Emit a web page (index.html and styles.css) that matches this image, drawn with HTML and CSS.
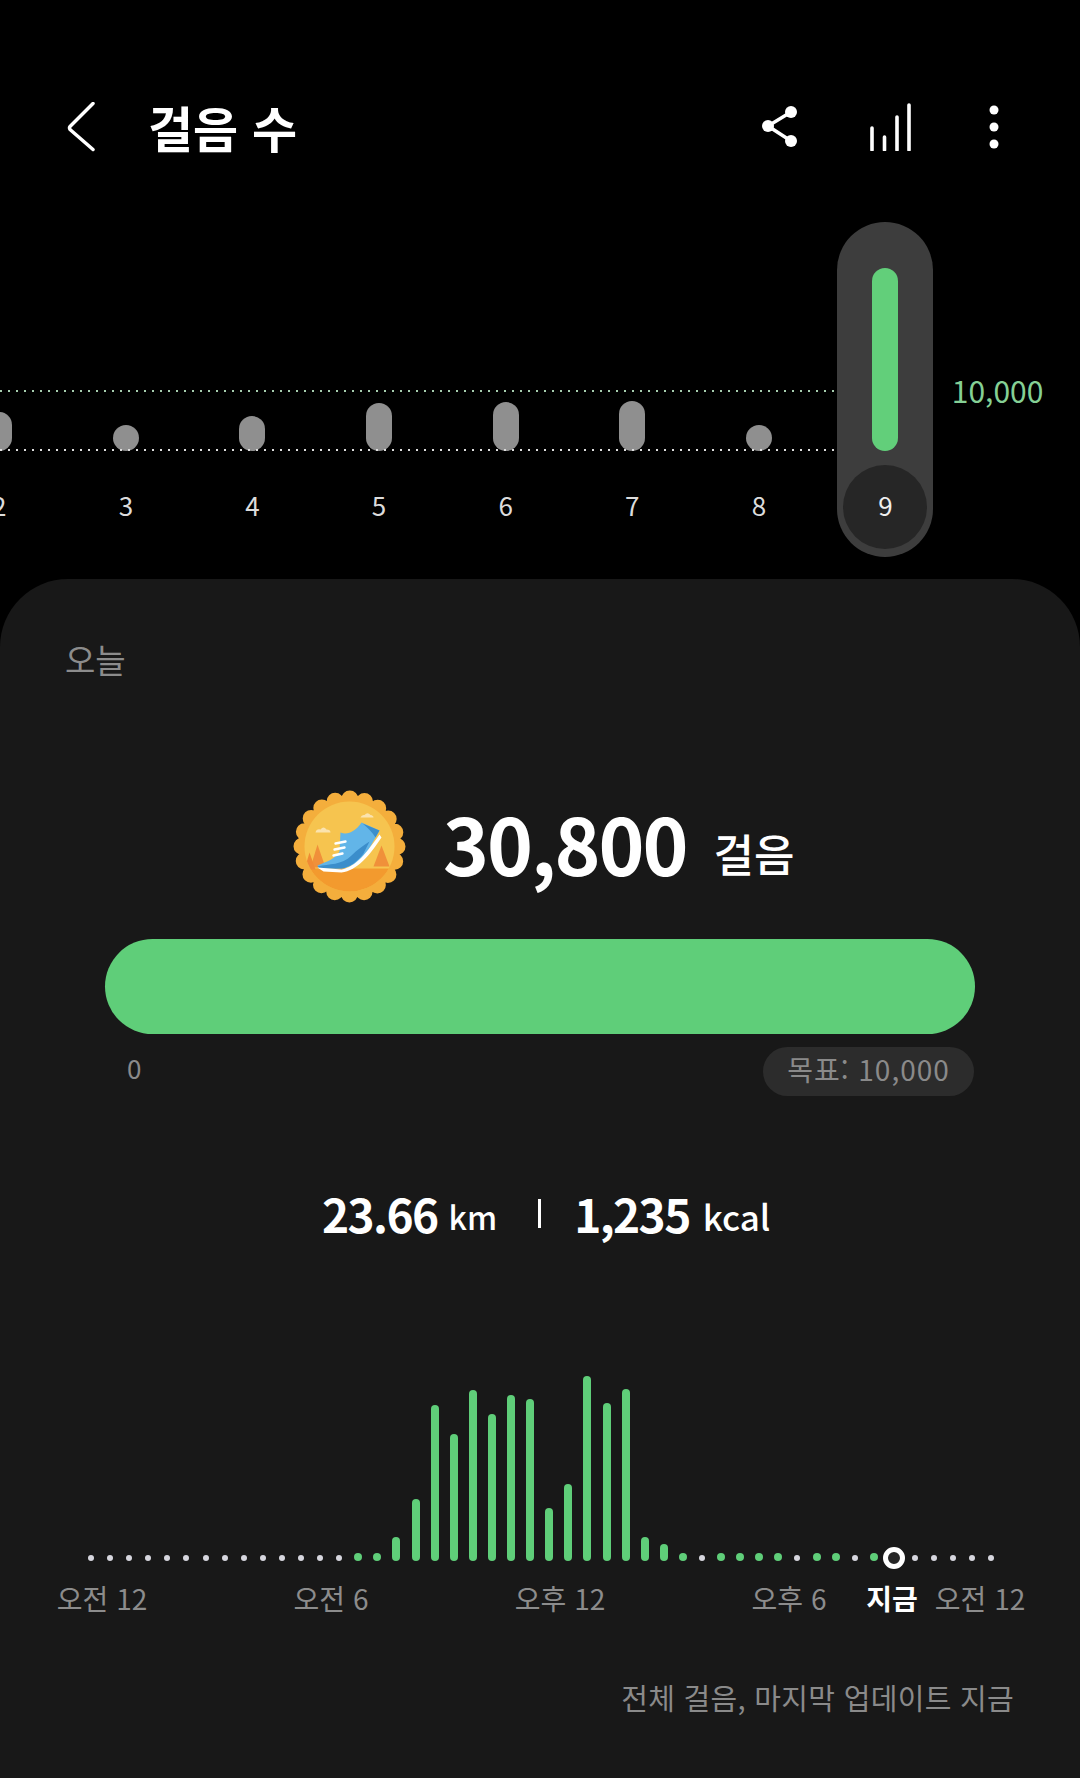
FILE: index.html
```html
<!DOCTYPE html>
<html lang="ko">
<head>
    <meta charset="UTF-8">
    <meta name="viewport" content="width=device-width, initial-scale=1.0">
    <title>걸음 수</title>
    <link rel="stylesheet" href="styles.css">
</head>
<body>
    <!-- Top bar -->
    <header class="top-bar">
        <svg class="icon-back" viewBox="0 0 30 50">
            <path d="M27 2 L4 25 Q3 26 4 28 L27 48" transform="translate(0 -0.5)"/>
        </svg>
        <h1 class="page-title">걸음 수</h1>
        <svg class="icon-share" viewBox="0 0 40 46">
            <path d="M31 8 L8 22 L31 37"/>
            <circle cx="31" cy="8" r="6"/>
            <circle cx="8" cy="22" r="6"/>
            <circle cx="31" cy="37" r="6"/>
        </svg>
        <svg class="icon-bars" viewBox="0 0 44 48">
            <path d="M3 25 V47 M15.5 34 V47 M28 14 V47 M40 2 V47"/>
        </svg>
        <svg class="icon-more" viewBox="0 0 16 46">
            <circle cx="8" cy="6" r="4.5"/>
            <circle cx="8" cy="23" r="4.5"/>
            <circle cx="8" cy="40" r="4.5"/>
        </svg>
    </header>

    <!-- Daily history strip -->
    <section class="history">
        <div class="goal-line"></div>
        <div class="base-line"></div>
        <div class="day">
            <div class="day-bar-area"><div class="day-bar" style="height: 39px"></div></div>
            <div class="day-label">2</div>
        </div>
        <div class="day">
            <div class="day-bar-area"><div class="day-bar" style="height: 26px"></div></div>
            <div class="day-label">3</div>
        </div>
        <div class="day">
            <div class="day-bar-area"><div class="day-bar" style="height: 35px"></div></div>
            <div class="day-label">4</div>
        </div>
        <div class="day">
            <div class="day-bar-area"><div class="day-bar" style="height: 48px"></div></div>
            <div class="day-label">5</div>
        </div>
        <div class="day">
            <div class="day-bar-area"><div class="day-bar" style="height: 49px"></div></div>
            <div class="day-label">6</div>
        </div>
        <div class="day">
            <div class="day-bar-area"><div class="day-bar" style="height: 50px"></div></div>
            <div class="day-label">7</div>
        </div>
        <div class="day">
            <div class="day-bar-area"><div class="day-bar" style="height: 26px"></div></div>
            <div class="day-label">8</div>
        </div>
        <div class="day">
            <div class="day-pill">
                <div class="day-pill-bar"></div>
                <div class="day-pill-label"><span>9</span></div>
            </div>
        </div>
        <div class="goal-label">10,000</div>
    </section>

    <!-- Today card -->
    <main class="card">
        <div class="card-title">오늘</div>

        <div class="hero">
            <svg class="medal" viewBox="13.5 10.5 113 113">
                <defs>
                    <clipPath id="medalDisc"><circle cx="70" cy="67" r="45"/></clipPath>
                </defs>
                <circle cx="70" cy="67" r="49" fill="#f4ae3c"/>
                <circle cx="70" cy="67" r="47.5" fill="none" stroke="#f4ae3c" stroke-width="17" stroke-linecap="round" stroke-dasharray="0 14.92"/>
                <g clip-path="url(#medalDisc)">
                    <rect x="20" y="20" width="100" height="100" fill="#f6c44f"/>
                    <rect x="20" y="89" width="100" height="40" fill="#f39a2e"/>
                    <path d="M31 88 L38 65 L46 88 Z" fill="#f0903a"/>
                    <path d="M25 90 L30 73 L36 90 Z" fill="#f08a35"/>
                    <path d="M94 87 L102 66 L110 87 Z" fill="#f0903a"/>
                </g>
                <path d="M36 53 Q37 49 41 50 Q44 46 47 50 Q51 50 51 53 Z" fill="#fbe3ae"/>
                <path d="M81 38 Q82 35 85 35.5 Q88 32 91 35.5 Q94 36 94 38 Z" fill="#fbe3ae"/>
                <path d="M38 86 C48 82 56 79 60 72 L61 53 C68 56 76 52 82 43 L100 51 L88 72 C80 82 72 88 62 89 L40 89 Z" fill="#62b5e8"/>
                <path d="M38 87 C50 84 62 86 72 76 C78 70 84 66 90 62 L84 74 C78 82 70 88 62 89 L40 89 Z" fill="#3b8ecb"/>
                <path d="M38 88 L62 90 C76 88 88 72 100 55 L102 58 C90 76 78 91 62 93 L44 92 Z" fill="#ffffff"/>
                <path d="M83 44 L100 51 L96 58 C92 52 88 48 83 44 Z" fill="#3b8ecb"/>
                <path d="M56 64 L66 62 M55 70 L65 68 M54 76 L63 74" stroke="#ffffff" stroke-width="2.4" stroke-linecap="round" fill="none"/>
            </svg>
            <span class="hero-count">30,800</span>
            <span class="hero-unit">걸음</span>
        </div>

        <div class="progress"></div>

        <div class="scale">
            <span class="scale-zero">0</span>
            <span class="scale-goal"><span>목표: 10,000</span></span>
        </div>

        <div class="stats">
            <span class="stat-num">23.66</span>
            <span class="stat-unit stat-km">km</span>
            <span class="stat-divider"></span>
            <span class="stat-num">1,235</span>
            <span class="stat-unit stat-kcal">kcal</span>
        </div>

        <!-- 48 half hour slots -->
        <div class="timeline">
            <div class="slot"><i class="dot"></i></div><div class="slot"><i class="dot"></i></div>
            <div class="slot"><i class="dot"></i></div><div class="slot"><i class="dot"></i></div>
            <div class="slot"><i class="dot"></i></div><div class="slot"><i class="dot"></i></div>
            <div class="slot"><i class="dot"></i></div><div class="slot"><i class="dot"></i></div>
            <div class="slot"><i class="dot"></i></div><div class="slot"><i class="dot"></i></div>
            <div class="slot"><i class="dot"></i></div><div class="slot"><i class="dot"></i></div>
            <div class="slot"><i class="dot"></i></div><div class="slot"><i class="dot"></i></div>
            <div class="slot"><i class="bar"></i></div><div class="slot"><i class="bar"></i></div>
            <div class="slot"><i class="bar" style="height: 24px"></i></div>
            <div class="slot"><i class="bar" style="height: 62px"></i></div>
            <div class="slot"><i class="bar" style="height: 156px"></i></div>
            <div class="slot"><i class="bar" style="height: 127px"></i></div>
            <div class="slot"><i class="bar" style="height: 171px"></i></div>
            <div class="slot"><i class="bar" style="height: 147px"></i></div>
            <div class="slot"><i class="bar" style="height: 166px"></i></div>
            <div class="slot"><i class="bar" style="height: 162px"></i></div>
            <div class="slot"><i class="bar" style="height: 53px"></i></div>
            <div class="slot"><i class="bar" style="height: 77px"></i></div>
            <div class="slot"><i class="bar" style="height: 185px"></i></div>
            <div class="slot"><i class="bar" style="height: 158px"></i></div>
            <div class="slot"><i class="bar" style="height: 172px"></i></div>
            <div class="slot"><i class="bar" style="height: 24px"></i></div>
            <div class="slot"><i class="bar" style="height: 17px"></i></div>
            <div class="slot"><i class="bar"></i></div><div class="slot"><i class="dot"></i></div>
            <div class="slot"><i class="bar"></i></div><div class="slot"><i class="bar"></i></div>
            <div class="slot"><i class="bar"></i></div><div class="slot"><i class="bar"></i></div>
            <div class="slot"><i class="dot"></i></div><div class="slot"><i class="bar"></i></div>
            <div class="slot"><i class="bar"></i></div><div class="slot"><i class="dot"></i></div>
            <div class="slot"><i class="bar"></i></div>
            <div class="slot"><i class="now"></i></div>
            <div class="slot"><i class="dot"></i></div><div class="slot"><i class="dot"></i></div>
            <div class="slot"><i class="dot"></i></div><div class="slot"><i class="dot"></i></div>
            <div class="slot"><i class="dot"></i></div>
        </div>

        <div class="axis">
            <span class="axis-label">오전 12</span>
            <span class="axis-label">오전 6</span>
            <span class="axis-label">오후 12</span>
            <span class="axis-label">오후 6</span>
            <span class="axis-now">지금</span>
            <span class="axis-last">오전 12</span>
        </div>

        <p class="footnote">전체 걸음, 마지막 업데이트 지금</p>
    </main>
</body>
</html>
```

FILE: styles.css
```css
* {
    box-sizing: border-box;
}

html,
body {
    margin: 0;
    height: 1778px;
    overflow: hidden;
    background-color: #000;
}

body {
    width: 1080px;
    font-family: "Noto Sans CJK KR", "Noto Sans", sans-serif;
    color: #fff;
}

/* Top bar */
.top-bar {
    display: flex;
    align-items: center;
    height: 130px;
    margin-top: 62px;
    padding: 0 78px 0 66px;
}

.top-bar svg {
    flex-shrink: 0;
}

.icon-back {
    width: 30px;
    height: 50px;
}

.icon-back path {
    fill: none;
    stroke: #fff;
    stroke-width: 3.5;
    stroke-linecap: round;
    stroke-linejoin: round;
}

.page-title {
    margin: 0 auto 0 52px;
    font-size: 49px;
    font-weight: 700;
    line-height: 60px;
}

.icon-share {
    width: 40px;
    height: 46px;
    fill: #fff;
}

.icon-share path {
    fill: none;
    stroke: #fff;
    stroke-width: 3.5;
}

.icon-bars {
    width: 44px;
    height: 48px;
    margin-left: 69px;
}

.icon-bars path {
    fill: none;
    stroke: #fff;
    stroke-width: 3.6;
    stroke-linecap: round;
}

.icon-more {
    width: 16px;
    height: 46px;
    margin-left: 73px;
    fill: #fff;
}

/* Daily history */
.history {
    position: relative;
    display: flex;
    align-items: flex-start;
    height: 387px;
    padding-top: 30px;
    margin-left: -64px;
    width: 1144px;
}

.goal-line,
.base-line {
    position: absolute;
    left: 64px;
    width: 835px;
    height: 2px;
    background-size: 8px 2px;
}

.goal-line {
    top: 198px;
    background-image: linear-gradient(90deg, #a6cdae 2px, transparent 2px);
}

.base-line {
    top: 257px;
    z-index: 1;
    background-image: linear-gradient(90deg, #dedede 2px, transparent 2px);
}

.day {
    display: flex;
    flex-direction: column;
    align-items: center;
    flex: 0 0 126.6px;
}

.day-bar-area {
    display: flex;
    align-items: flex-end;
    height: 229px;
}

.day-bar {
    width: 26px;
    border-radius: 13px;
    background-color: #8f8f8f;
}

.day-label {
    font-size: 26px;
    line-height: 108px;
    color: #dcdcdc;
}

.day-pill {
    display: flex;
    flex-direction: column;
    align-items: center;
    width: 96px;
    height: 335px;
    padding-top: 46px;
    border-radius: 48px;
    background-color: #3d3d3d;
}

.day-pill-bar {
    width: 26px;
    height: 183px;
    border-radius: 13px;
    background-color: #62cf7a;
}

.day-pill-label {
    display: flex;
    align-items: center;
    justify-content: center;
    width: 84px;
    height: 84px;
    margin-top: 14px;
    padding-bottom: 5px;
    border-radius: 50%;
    background-color: #262626;
    font-size: 26px;
    color: #efefef;
}

.goal-label {
    margin: 153px 0 0 3px;
    font-size: 30px;
    line-height: 30px;
    color: #85d095;
    white-space: nowrap;
}

/* Today card */
.card {
    height: 1199px;
    padding-top: 61px;
    border-radius: 68px 68px 0 0;
    background-color: #181818;
}

.card-title {
    margin-left: 65px;
    font-size: 33px;
    line-height: 38px;
    color: #8c8c8c;
}

.hero {
    display: flex;
    align-items: center;
    height: 113px;
    margin-top: 112px;
    padding-left: 293px;
}

.medal {
    width: 113px;
    height: 113px;
    flex-shrink: 0;
}

.hero-count {
    margin: 0 0 10px 37px;
    font-size: 78px;
    font-weight: 700;
    letter-spacing: -2px;
    line-height: 100px;
}

.hero-unit {
    margin: 12px 0 0 27px;
    font-size: 44px;
    font-weight: 500;
    line-height: 60px;
}

.progress {
    width: 870px;
    height: 95px;
    margin: 36px 0 0 105px;
    border-radius: 48px;
    background-color: #5fce79;
}

.scale {
    display: flex;
    align-items: center;
    justify-content: space-between;
    width: 847px;
    height: 49px;
    margin: 13px 0 0 127px;
    font-size: 28px;
    color: #8a8a8a;
}

.scale-zero {
    font-size: 26px;
    line-height: 42px;
    margin-bottom: 7px;
}

.scale-goal {
    display: flex;
    align-items: center;
    justify-content: center;
    width: 211px;
    height: 49px;
    padding-bottom: 5px;
    border-radius: 25px;
    background-color: #2c2c2c;
    letter-spacing: 1px;
    white-space: nowrap;
}

.stats {
    display: flex;
    align-items: center;
    height: 60px;
    margin-top: 87px;
    padding-left: 322px;
}

.stat-num {
    font-size: 46px;
    font-weight: 700;
    letter-spacing: -1.6px;
    line-height: 60px;
}

.stat-unit {
    margin-top: 6px;
    font-weight: 500;
    line-height: 60px;
}

.stat-km {
    margin-left: 11px;
    font-size: 32px;
}

.stat-kcal {
    margin-left: 13px;
    font-size: 35px;
}

.stat-divider {
    width: 3px;
    height: 29px;
    margin: 0 33px 0 41px;
    background-color: #fff;
}

/* 24 hour timeline */
.timeline {
    display: flex;
    align-items: flex-end;
    height: 190px;
    margin-top: 128px;
    padding-left: 81.45px;
}

.slot {
    display: flex;
    align-items: flex-end;
    justify-content: center;
    flex: 0 0 19.1px;
}

.slot i {
    display: block;
    flex-shrink: 0;
}

.dot {
    width: 6px;
    height: 6px;
    border-radius: 50%;
    background-color: #d6d6de;
}

.bar {
    width: 8px;
    height: 8px;
    border-radius: 4px;
    background-color: #5fce79;
}

.now {
    position: relative;
    z-index: 1;
    width: 22px;
    height: 22px;
    margin-bottom: -8px;
    border: 5px solid #fff;
    border-radius: 50%;
    background-color: #262626;
}

.axis {
    display: flex;
    margin-top: 17px;
    padding-left: 47px;
    font-size: 28px;
    line-height: 40px;
    color: #8c8c8c;
    white-space: nowrap;
}

.axis-label {
    width: 110px;
    text-align: center;
}

.axis-label + .axis-label {
    margin-left: 119px;
}

.axis-now {
    width: 60px;
    margin-left: 18px;
    font-weight: 700;
    text-align: center;
    color: #fff;
}

.axis-last {
    width: 100px;
    margin-left: 8px;
    text-align: center;
}

.footnote {
    margin: 59px 66px 0 0;
    font-size: 29px;
    letter-spacing: 0.3px;
    line-height: 40px;
    text-align: right;
    color: #8a8a8a;
}
```
